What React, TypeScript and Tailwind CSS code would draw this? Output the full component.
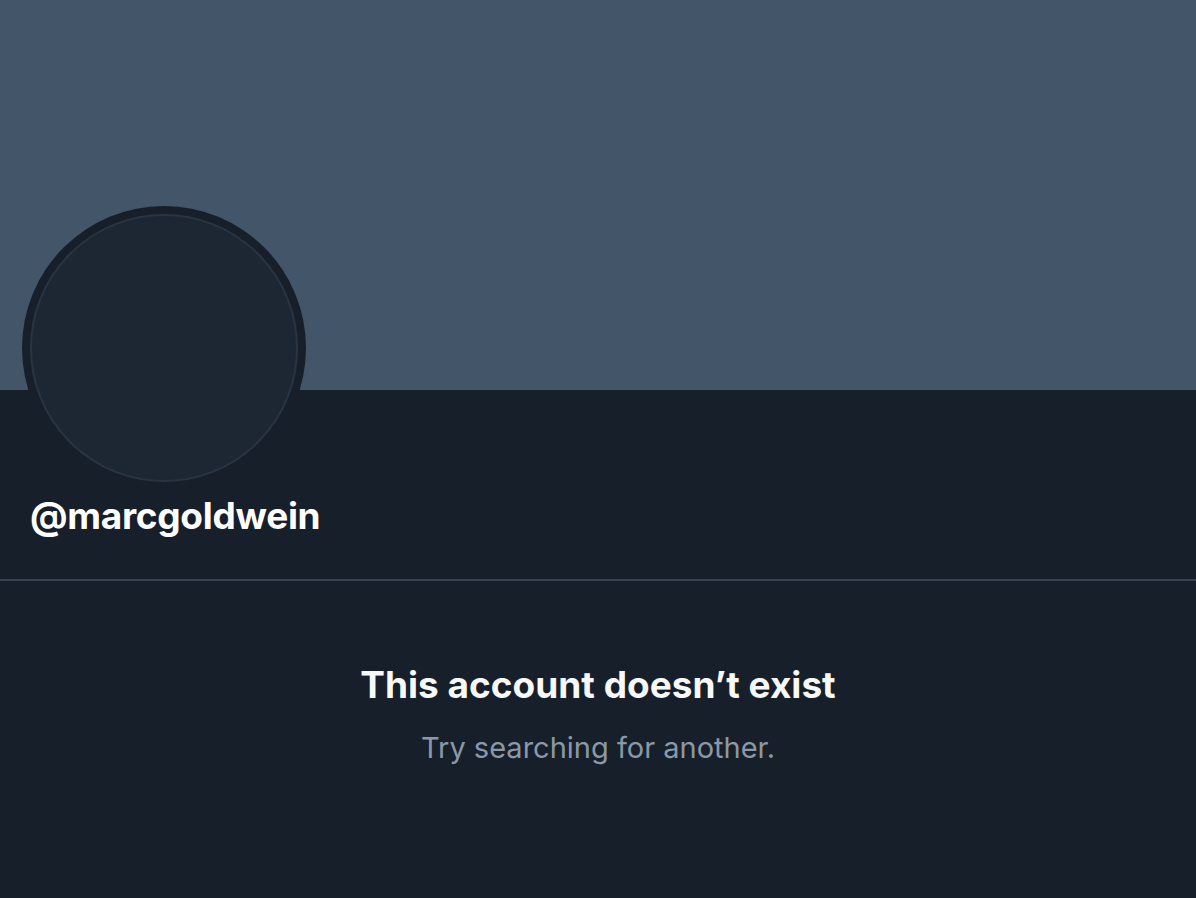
export default function App() {
  return (
    <div className="w-[1196px] h-[898px] bg-[#171f2a] overflow-hidden" style={{ fontFamily: 'Inter, "Noto Sans", sans-serif' }}>
      <div className="h-[390px] bg-[#435569]" />
      <div className="relative h-[191px] border-b-2 border-[#38434f]">
        <div className="absolute left-[22px] top-[-184px] w-[284px] h-[284px] rounded-full bg-[#171f2a] p-[8px]">
          <div className="w-full h-full rounded-full bg-[#1d2733] border-2 border-[#2a3441]" />
        </div>
        <div className="pt-[107px] pl-[30px] text-[37px] font-bold text-white leading-none tracking-[-0.3px]">@marcgoldwein</div>
      </div>
      <div className="flex flex-col items-center pt-[85px]">
        <div className="text-[37px] font-bold text-[#f7f9f9] leading-none tracking-normal">This account doesn’t exist</div>
        <div className="mt-[30px] text-[29px] text-[#8b98a5] leading-none">Try searching for another.</div>
      </div>
    </div>
  );
}
